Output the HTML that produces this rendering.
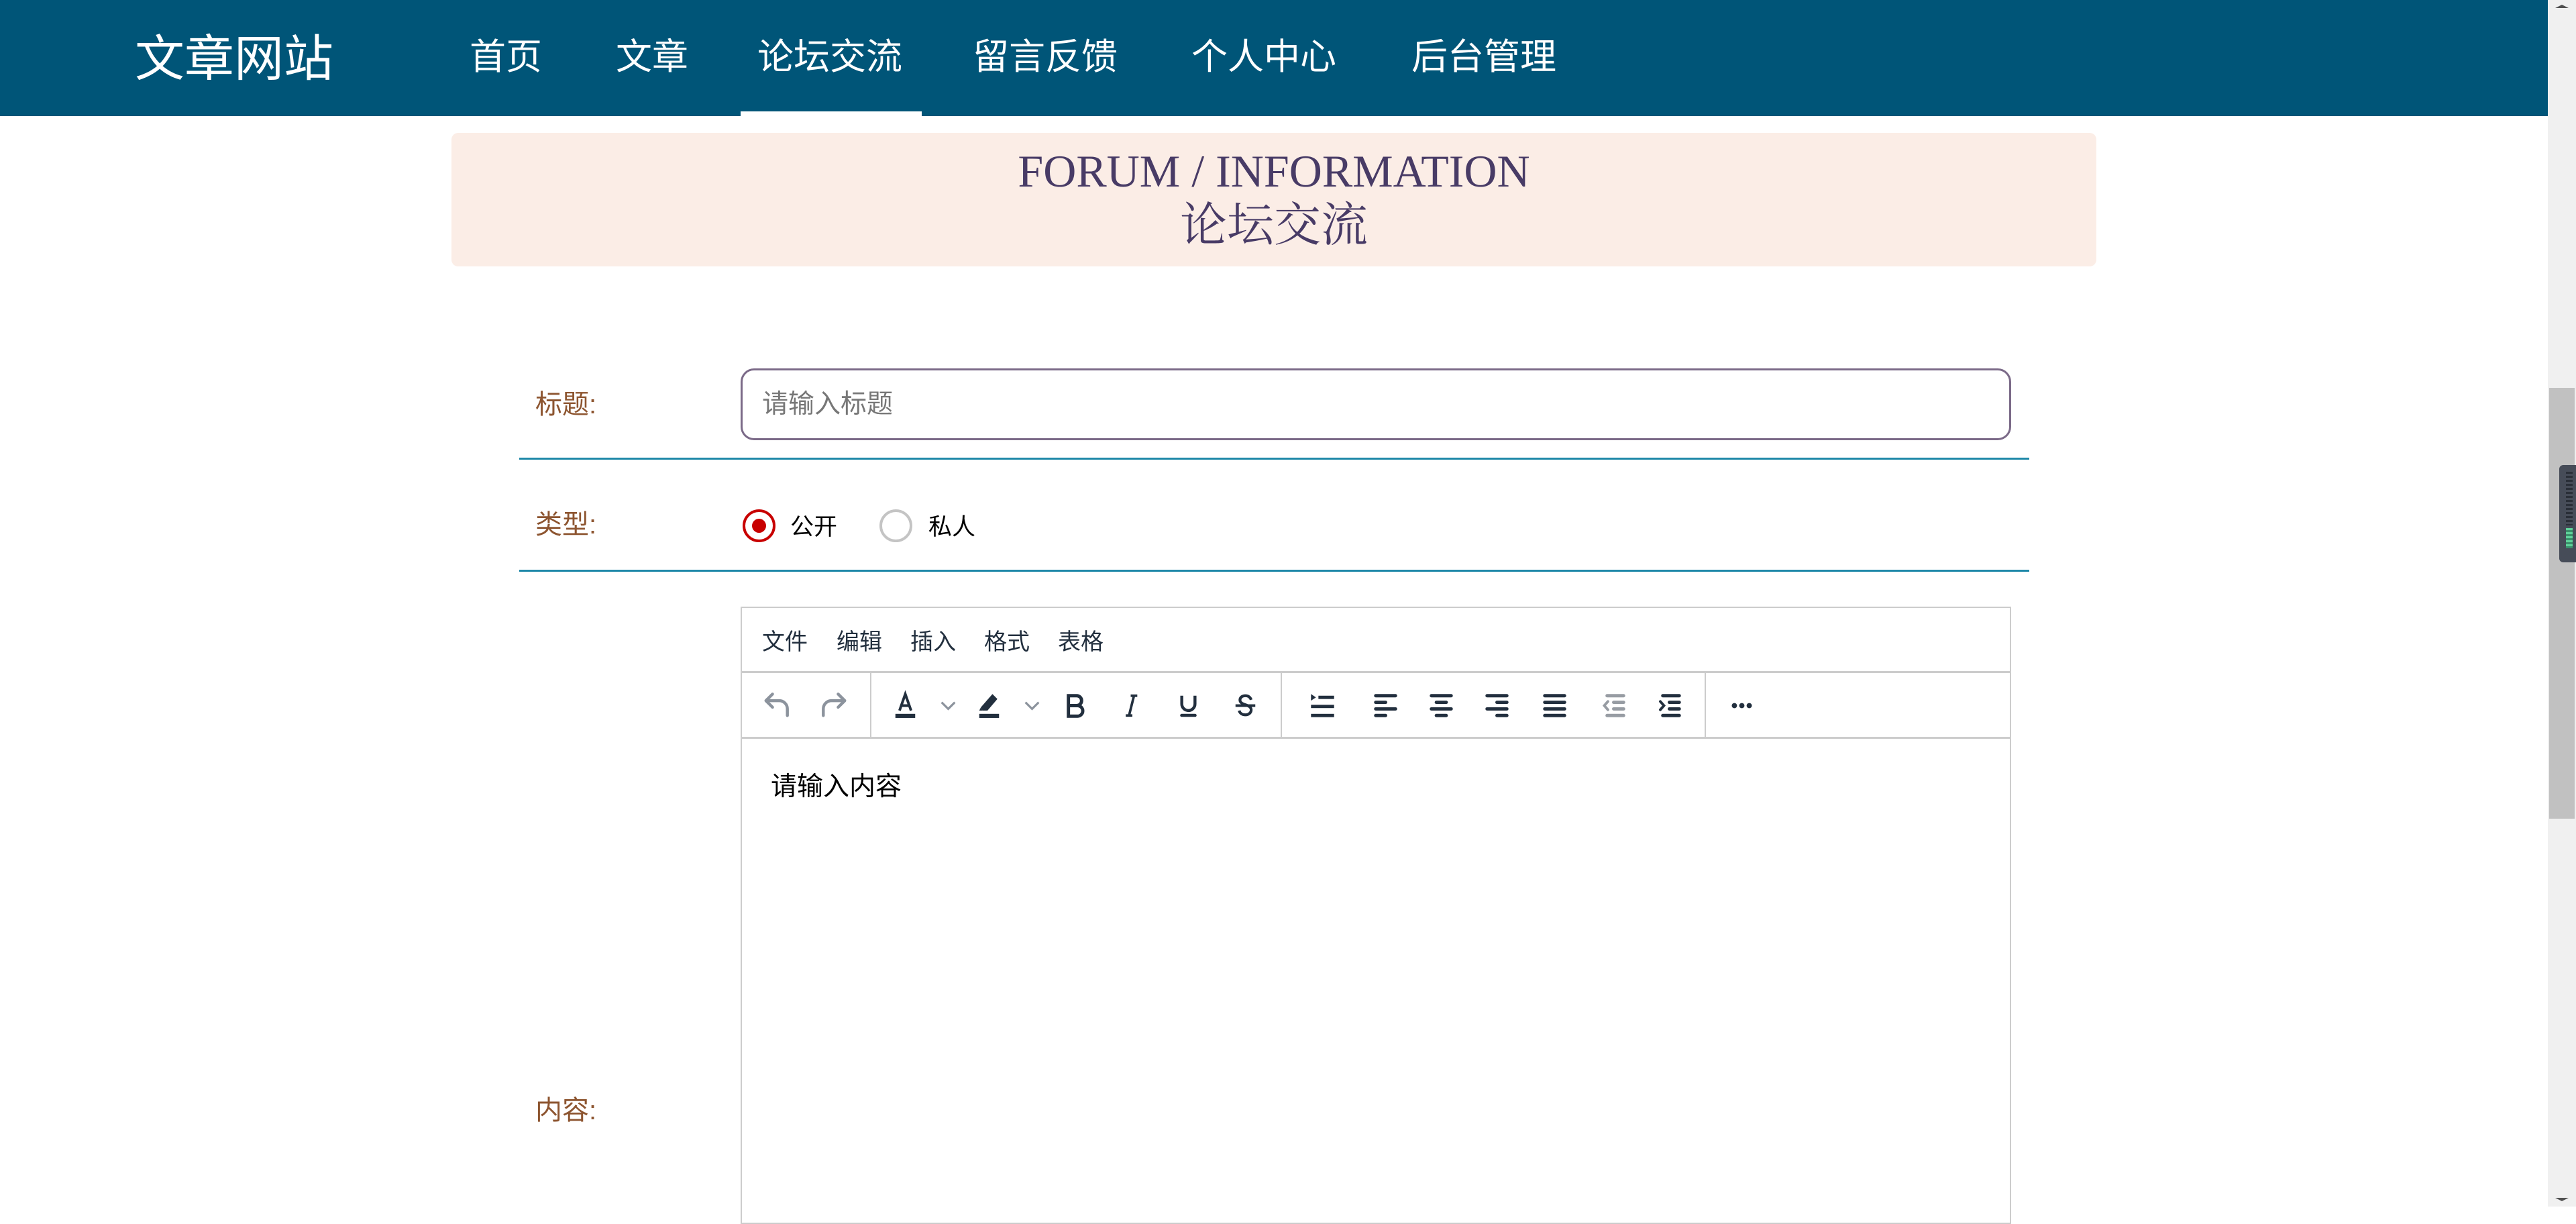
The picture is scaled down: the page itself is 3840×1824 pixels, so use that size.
<!DOCTYPE html>
<html><head><meta charset="utf-8">
<style>
*{margin:0;padding:0;box-sizing:border-box}
html,body{width:3840px;height:1798px;overflow:hidden;background:#fff;font-family:"Liberation Sans","Noto Sans CJK SC",sans-serif}
.a{position:absolute;white-space:nowrap}
#nav{left:0;top:0;width:3798px;height:173px;background:#005578}
.ni{color:#fff;font-size:54px;top:50px;line-height:70px}
.lbl{color:#8d5530;font-size:40px;left:798px;line-height:50px}
.hr{left:774px;width:2251px;height:3px;background:#1e88a8}
.mi{font-size:34px;color:#222f3e;top:932px;line-height:50px}
.ic{position:absolute;top:1022px;width:59px;height:59px}
.sep{position:absolute;top:1002px;width:2px;height:98px;background:#ccc}
</style></head><body>
<div id="nav" class="a"></div>
<div class="a" style="left:201px;top:38px;color:#fff;font-size:74px;line-height:100px">文章网站</div>
<div class="a ni" style="left:700px">首页</div>
<div class="a ni" style="left:918px">文章</div>
<div class="a ni" style="left:1129px">论坛交流</div>
<div class="a ni" style="left:1450px">留言反馈</div>
<div class="a ni" style="left:1776px">个人中心</div>
<div class="a ni" style="left:2104px">后台管理</div>
<div class="a" style="left:1104px;top:166px;width:270px;height:7px;background:#fff"></div>

<div class="a" style="left:673px;top:198px;width:2452px;height:199px;background:#fbede6;border-radius:10px"></div>
<div class="a" style="left:673px;width:2452px;top:215px;text-align:center;font-family:'Liberation Serif','Noto Serif CJK SC',serif;color:#483b66;font-size:68px;line-height:80px">FORUM / INFORMATION</div>
<div class="a" style="left:673px;width:2452px;top:294px;text-align:center;font-family:'Liberation Serif','Noto Serif CJK SC',serif;color:#483b66;font-size:70px;line-height:86px">论坛交流</div>

<div class="a lbl" style="top:578px">标题:</div>
<div class="a" style="left:1104px;top:549px;width:1894px;height:107px;border:3px solid #7b6a88;border-radius:20px"></div>
<div class="a" style="left:1136px;top:578px;font-size:39px;color:#777;line-height:50px">请输入标题</div>
<div class="a hr" style="top:682px"></div>

<div class="a lbl" style="top:757px">类型:</div>
<div class="a" style="left:1107px;top:759px;width:49px;height:49px;border:4px solid #c80000;border-radius:50%"></div>
<div class="a" style="left:1121px;top:773px;width:21px;height:21px;background:#c80000;border-radius:50%"></div>
<div class="a" style="left:1178px;top:761px;font-size:35px;line-height:50px;color:#000">公开</div>
<div class="a" style="left:1311px;top:759px;width:49px;height:49px;border:4px solid #c4c4c4;border-radius:50%"></div>
<div class="a" style="left:1384px;top:761px;font-size:35px;line-height:50px;color:#000">私人</div>
<div class="a hr" style="top:849px"></div>

<div class="a lbl" style="top:1630px">内容:</div>

<div class="a" style="left:1104px;top:904px;width:1894px;height:920px;border:2px solid #ccc"></div>
<div class="a" style="left:1104px;top:1000px;width:1894px;height:3px;background:#ccc"></div>
<div class="a" style="left:1104px;top:1098px;width:1894px;height:3px;background:#ccc"></div>
<div class="a mi" style="left:1136px">文件</div>
<div class="a mi" style="left:1247px">编辑</div>
<div class="a mi" style="left:1357px">插入</div>
<div class="a mi" style="left:1467px">格式</div>
<div class="a mi" style="left:1577px">表格</div>
<div class="sep" style="left:1297px"></div>
<div class="sep" style="left:1909px"></div>
<div class="sep" style="left:2541px"></div>

<svg class="ic" style="left:1127px" viewBox="0 0 24 24"><path d="M7 9h7a5 5 0 0 1 5 5v4" fill="none" stroke="#8c939d" stroke-width="1.8" stroke-linecap="round"/><path d="M10 5L6 9l4 4" fill="none" stroke="#8c939d" stroke-width="1.8" stroke-linecap="round" stroke-linejoin="round"/></svg>
<svg class="ic" style="left:1215px" viewBox="0 0 24 24"><path d="M17 9h-7a5 5 0 0 0-5 5v4" fill="none" stroke="#8c939d" stroke-width="1.8" stroke-linecap="round"/><path d="M14 5l4 4-4 4" fill="none" stroke="#8c939d" stroke-width="1.8" stroke-linecap="round" stroke-linejoin="round"/></svg>
<svg class="ic" style="left:1320px" viewBox="0 0 24 24"><path d="M8.5 15L12 5l3.5 10M9.7 12h4.6" fill="none" stroke="#222f3e" stroke-width="1.6"/><rect x="6" y="17" width="12" height="2.5" fill="#222f3e"/></svg>
<svg class="ic" style="left:1384px" viewBox="0 0 24 24"><path d="M8 10l4 4 4-4" fill="none" stroke="#8c939d" stroke-width="1.3"/></svg>
<svg class="ic" style="left:1445px" viewBox="0 0 24 24"><path d="M14 5l3 3-6 7H8l-1-2z" fill="#222f3e"/><path d="M7 13l-1 2h2z" fill="#222f3e"/><rect x="6" y="17" width="12" height="2.5" fill="#222f3e"/></svg>
<svg class="ic" style="left:1509px" viewBox="0 0 24 24"><path d="M8 10l4 4 4-4" fill="none" stroke="#8c939d" stroke-width="1.3"/></svg>
<svg class="ic" style="left:1573px" viewBox="0 0 24 24"><path d="M8 6h5a3 3 0 0 1 0 6H8zM8 12h5.5a3.2 3.2 0 0 1 0 6.4H8z" fill="none" stroke="#222f3e" stroke-width="2"/></svg>
<svg class="ic" style="left:1656px" viewBox="0 0 24 24"><path d="M12 6h4M9 18h4M14 6l-3 12" fill="none" stroke="#222f3e" stroke-width="1.5"/></svg>
<svg class="ic" style="left:1742px" viewBox="0 0 24 24"><path d="M8 6v5a4 4 0 0 0 8 0V6" fill="none" stroke="#222f3e" stroke-width="1.8"/><rect x="7" y="17" width="10" height="1.8" rx=".9" fill="#222f3e"/></svg>
<svg class="ic" style="left:1827px" viewBox="0 0 24 24"><path d="M15.5 8.5C15 7 13.8 6 12 6c-2 0-3.3 1.1-3.3 2.6 0 3.4 6.8 2.4 6.8 6 0 1.7-1.5 3-3.5 3-2 0-3.4-1-3.8-2.6" fill="none" stroke="#222f3e" stroke-width="1.7"/><rect x="6" y="11.2" width="12" height="1.6" fill="#222f3e"/></svg>
<svg class="ic" style="left:1942px" viewBox="0 0 24 24"><path d="M5 5l3 2-3 2z" fill="#222f3e"/><rect x="9.5" y="6" width="9.5" height="2" fill="#222f3e"/><rect x="5" y="11.5" width="14" height="2" fill="#222f3e"/><rect x="5" y="17" width="14" height="2" fill="#222f3e"/></svg>
<svg class="ic" style="left:2036px" viewBox="0 0 24 24" fill="#222f3e"><rect x="5" y="5" width="14" height="2" rx="1"/><rect x="5" y="9" width="8" height="2" rx="1"/><rect x="5" y="13" width="14" height="2" rx="1"/><rect x="5" y="17" width="8" height="2" rx="1"/></svg>
<svg class="ic" style="left:2119px" viewBox="0 0 24 24" fill="#222f3e"><rect x="5" y="5" width="14" height="2" rx="1"/><rect x="8" y="9" width="8" height="2" rx="1"/><rect x="5" y="13" width="14" height="2" rx="1"/><rect x="8" y="17" width="8" height="2" rx="1"/></svg>
<svg class="ic" style="left:2202px" viewBox="0 0 24 24" fill="#222f3e"><rect x="5" y="5" width="14" height="2" rx="1"/><rect x="11" y="9" width="8" height="2" rx="1"/><rect x="5" y="13" width="14" height="2" rx="1"/><rect x="11" y="17" width="8" height="2" rx="1"/></svg>
<svg class="ic" style="left:2288px" viewBox="0 0 24 24" fill="#222f3e"><rect x="5" y="5" width="14" height="2" rx="1"/><rect x="5" y="9" width="14" height="2" rx="1"/><rect x="5" y="13" width="14" height="2" rx="1"/><rect x="5" y="17" width="14" height="2" rx="1"/></svg>
<svg class="ic" style="left:2376px" viewBox="0 0 24 24" fill="#979ca3"><rect x="7" y="5" width="12" height="2" rx="1"/><rect x="11" y="9" width="8" height="2" rx="1"/><rect x="11" y="13" width="8" height="2" rx="1"/><rect x="7" y="17" width="12" height="2" rx="1"/><path d="M8.5 9.5L6.3 12l2.2 2.5" fill="none" stroke="#979ca3" stroke-width="1.6" stroke-linecap="round"/></svg>
<svg class="ic" style="left:2459px" viewBox="0 0 24 24" fill="#222f3e"><rect x="7" y="5" width="12" height="2" rx="1"/><rect x="11" y="9" width="8" height="2" rx="1"/><rect x="11" y="13" width="8" height="2" rx="1"/><rect x="7" y="17" width="12" height="2" rx="1"/><path d="M6.5 9.5L8.7 12l-2.2 2.5" fill="none" stroke="#222f3e" stroke-width="1.6" stroke-linecap="round"/></svg>
<svg class="ic" style="left:2567px" viewBox="0 0 24 24" fill="#222f3e"><circle cx="7.5" cy="12" r="1.6"/><circle cx="12" cy="12" r="1.6"/><circle cx="16.5" cy="12" r="1.6"/></svg>

<div class="a" style="left:1149px;top:1148px;font-size:39px;line-height:50px;color:#000">请输入内容</div>

<div class="a" style="left:3798px;top:0;width:42px;height:1798px;background:#f0f0f0"></div>
<div class="a" style="left:3800px;top:578px;width:38px;height:642px;background:#c1c1c1"></div>
<div class="a" style="left:3815px;top:693px;width:25px;height:145px;background:#464c58;border-radius:6px 0 0 6px"></div>
<div class="a" style="left:3825px;top:703px;width:10px;height:80px;background:repeating-linear-gradient(#2a2f38 0 3px,#464c58 3px 6px)"></div>
<div class="a" style="left:3825px;top:787px;width:10px;height:30px;background:repeating-linear-gradient(#5fd19a 0 3px,#3a8f6a 3px 6px)"></div>
<svg class="a" style="left:3808px;top:4px" width="22" height="12"><path d="M1 8L11 3l10 5z" fill="#505050"/></svg>
<svg class="a" style="left:3808px;top:1782px" width="22" height="12"><path d="M1 3h20L11 8z" fill="#505050"/></svg>
</body></html>
